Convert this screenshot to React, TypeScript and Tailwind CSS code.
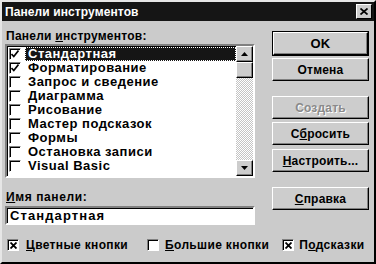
import React from "react";

const items = [
  { name: "Стандартная", checked: true, selected: true },
  { name: "Форматирование", checked: true },
  { name: "Запрос и сведение", checked: false },
  { name: "Диаграмма", checked: false },
  { name: "Рисование", checked: false },
  { name: "Мастер подсказок", checked: false },
  { name: "Формы", checked: false },
  { name: "Остановка записи", checked: false },
  { name: "Visual Basic", checked: false },
];

function Check() {
  return (
    <svg width="8" height="8" viewBox="0 0 8 8">
      <path d="M0.5 4 L2.8 6.5 L7.5 0.5" stroke="#000" strokeWidth="1.7" fill="none" />
    </svg>
  );
}

function Cross() {
  return (
    <svg width="7" height="7" viewBox="0 0 7 7">
      <path d="M0.5 0.5 L6.5 6.5 M6.5 0.5 L0.5 6.5" stroke="#000" strokeWidth="1.8" fill="none" />
    </svg>
  );
}

function Box({ children }: { children?: React.ReactNode }) {
  return (
    <span className="w-[12px] h-[12px] shrink-0 bg-white flex items-center justify-center border border-t-[#808080] border-l-[#808080] border-b-white border-r-white shadow-[inset_1px_1px_0_#000]">
      {children}
    </span>
  );
}

function Btn({
  children,
  def,
  disabled,
  className = "",
}: {
  children: React.ReactNode;
  def?: boolean;
  disabled?: boolean;
  className?: string;
}) {
  return (
    <div className={`w-[97px] h-[23px] ${def ? "border border-black" : ""} ${className}`}>
      <div className="w-full h-full bg-[#cdcdcd] border-t border-l border-t-white border-l-white border-r border-b border-r-black border-b-black shadow-[inset_-1px_-1px_0_#808080] flex items-center justify-center">
        <span className={`text-[12px] font-bold tracking-[0.2px] ${disabled ? "text-[#8a8a8a] [text-shadow:1px_1px_0_#fff]" : "text-black"}`}>
          {children}
        </span>
      </div>
    </div>
  );
}

export default function App() {
  return (
    <div className="w-[376px] h-[264px] bg-[#cbcbcb] font-['Liberation_Sans',Arial,sans-serif] border-t-2 border-l-2 border-t-[#e6e6e6] border-l-[#e6e6e6] border-r-2 border-b-2 border-r-black border-b-black flex flex-col overflow-hidden">
      {/* title bar */}
      <div className="h-[19px] bg-[#151515] flex items-center justify-between pl-[3px] pr-[2px]">
        <span className="text-white text-[12px] font-bold tracking-[0.1px]">Панели инструментов</span>
        <div className="w-[16px] h-[15px] bg-[#cdcdcd] border-t border-l border-white border-r border-b border-r-black border-b-black flex items-center justify-center">
          <svg width="8" height="7" viewBox="0 0 8 7">
            <path d="M0.5 0.5 L7.5 6.5 M7.5 0.5 L0.5 6.5" stroke="#000" strokeWidth="1.7" />
          </svg>
        </div>
      </div>

      <div className="flex flex-1 pl-[3px] pr-[4px]">
        {/* left column */}
        <div className="w-[250px] flex flex-col">
          <div className="mt-[9px] h-[13px] text-[12px] font-bold leading-[13px] pl-[1px] tracking-[0.25px]">
            Панели <span className="underline">и</span>нструментов:
          </div>
          <div className="mt-[1px] h-[134px] border-2 border-t-[#808080] border-l-[#808080] border-b-white border-r-white shadow-[inset_1px_1px_0_#000] bg-white flex">
            <div className="flex-1 flex flex-col pt-[1px] pl-[1px]">
              {items.map((it) => (
                <div key={it.name} className="h-[14px] flex items-center">
                  <span className="ml-[1px]">
                    <Box>{it.checked ? <Check /> : null}</Box>
                  </span>
                  <div
                    className={`ml-[4px] flex-1 h-[14px] flex items-center pl-[3px] text-[13px] font-bold tracking-[0.5px] whitespace-nowrap overflow-hidden ${
                      it.selected ? "bg-[#151515] text-white outline-1 outline-dotted outline-white -outline-offset-1" : "text-black"
                    }`}
                  >
                    {it.name}
                  </div>
                </div>
              ))}
            </div>
            {/* scrollbar */}
            <div className="w-[17px] flex flex-col">
              <div className="h-[16px] bg-[#cdcdcd] border-t border-l border-white border-r border-b border-r-black border-b-black shadow-[inset_-1px_-1px_0_#808080] flex items-center justify-center">
                <svg width="7" height="4" viewBox="0 0 7 4">
                  <path d="M3.5 0 L7 4 L0 4 Z" fill="#000" />
                </svg>
              </div>
              <div className="h-[16px] bg-[#cdcdcd] border-t border-l border-white border-r border-b border-r-black border-b-black shadow-[inset_-1px_-1px_0_#808080]" />
              <div className="flex-1 bg-[repeating-conic-gradient(#c4c4c4_0_25%,#ffffff_0_50%)] bg-[length:2px_2px]" />
              <div className="h-[16px] bg-[#cdcdcd] border-t border-l border-white border-r border-b border-r-black border-b-black shadow-[inset_-1px_-1px_0_#808080] flex items-center justify-center">
                <svg width="7" height="4" viewBox="0 0 7 4">
                  <path d="M0 0 L7 0 L3.5 4 Z" fill="#000" />
                </svg>
              </div>
            </div>
          </div>
          <div className="mt-[13px] h-[12px] text-[12px] font-bold leading-[12px] pl-[1px] tracking-[0.6px]">
            <span className="underline">И</span>мя панели:
          </div>
          <div className="mt-[3px] h-[19px] border-2 border-t-[#808080] border-l-[#808080] border-b-white border-r-white shadow-[inset_1px_1px_0_#000] bg-white flex items-center pl-[3px] text-[13px] font-bold tracking-[1.1px]">
            Стандартная
          </div>
        </div>

        {/* right column */}
        <div className="flex-1 flex flex-col items-end pt-[10px] pr-[1px]">
          <Btn def className="h-[25px] w-[97px]">
            <span className="text-[13px]">OK</span>
          </Btn>
          <Btn className="mt-[2px]">Отмена</Btn>
          <Btn disabled className="mt-[15px]">Создать</Btn>
          <Btn className="mt-[3px]">
            С<span className="underline">б</span>росить
          </Btn>
          <Btn className="mt-[4px]">
            <span className="underline">Н</span>астроить...
          </Btn>
          <Btn className="mt-[15px]">
            <span className="underline">С</span>правка
          </Btn>
        </div>
      </div>

      {/* bottom checkboxes */}
      <div className="h-[28px] flex items-center pl-[5px] pb-[6px] text-[12px] font-bold tracking-[0.35px]">
        <Box>
          <Cross />
        </Box>
        <span className="ml-[7px]">
          <span className="underline">Ц</span>ветные кнопки
        </span>
        <span className="ml-[19px]">
          <Box />
        </span>
        <span className="ml-[6px]">
          <span className="underline">Б</span>ольшие кнопки
        </span>
        <span className="ml-[13px]">
          <Box>
            <Cross />
          </Box>
        </span>
        <span className="ml-[5px]">
          П<span className="underline">о</span>дсказки
        </span>
      </div>
    </div>
  );
}
